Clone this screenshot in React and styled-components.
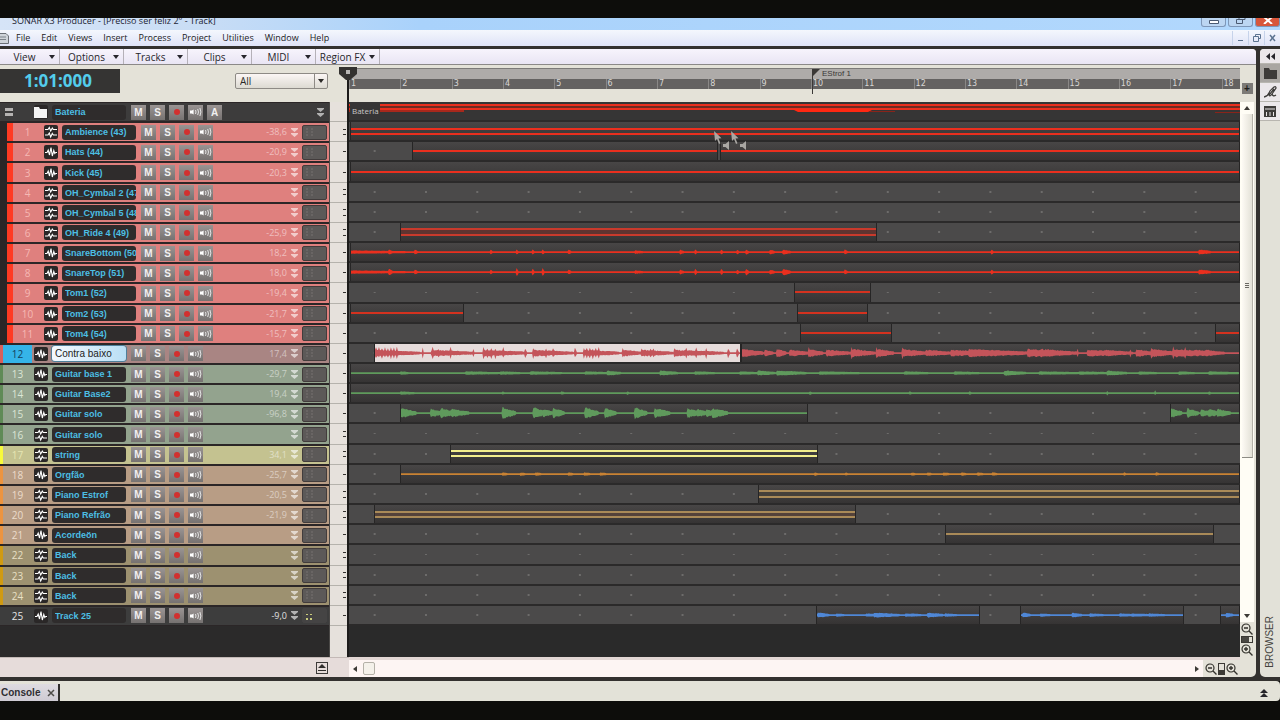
import React from "react";
import styled, { createGlobalStyle, css } from "styled-components";

const GlobalStyle = createGlobalStyle`
  * {
    box-sizing: border-box;
  }

  body {
    margin: 0;
    background: #0d0d0b;
    font-family: "Liberation Sans", sans-serif;
    font-size: 10px;
  }

  button, input, select {
    font-family: inherit;
    font-size: inherit;
    border: none;
    padding: 0;
    margin: 0;
  }

  ul {
    list-style: none;
    margin: 0;
    padding: 0;
  }
`;

const UI_FONT = `"Open Sans", "Noto Sans", sans-serif`;

/* ---------- data ---------- */

// width of the visible timeline, in the units used by the clips below
const SPAN = 891;
const BARS = Array.from({ length: 18 }, (_, i) => i + 1);

const MENUS = [
  "File",
  "Edit",
  "Views",
  "Insert",
  "Process",
  "Project",
  "Utilities",
  "Window",
  "Help",
];
const TOOLS = ["View", "Options", "Tracks", "Clips", "MIDI", "Region FX"];

const RED = "#ea2f1e";
const GREEN = "#5f9a5c";
const ORANGE = "#c98233";
const SAND = "#a98a58";
const BLUE = "#4f87d6";
const PINK = "#c4545a";

const THEMES = {
  red: { bg: "#df807e", strip: "#ff3a22", num: "#f6b9b4" },
  bass: { bg: "#a98583", strip: "#d8605c", num: "#14405c" },
  green: { bg: "#93a38e", strip: "#5f8a56", num: "#dbe6d6" },
  yellow: { bg: "#c4c290", strip: "#f8fa3c", num: "#e6e6b4" },
  orange: { bg: "#b89d85", strip: "#ec9440", num: "#ecdccb" },
  gold: { bg: "#9d9170", strip: "#d09a12", num: "#e9e0c4" },
  plain: { bg: "#3d3d3d", strip: "#3d3d3d", num: "#e6e6e6" },
};

const range = (from, to, step) => {
  const out = [];
  for (let i = from; i <= to; i += step) out.push(i);
  return out;
};

// [start, length, height]: a burst falls off towards its end
const SNARE = [[0, 55, 1], [38, 4, 3], [64, 3, 2], [140, 2, 2], [166, 2, 4], [182, 2, 3], [192, 2, 4], [218, 3, 2], [285, 8, 1], [330, 4, 2], [345, 2, 3], [371, 2, 3], [387, 2, 2], [396, 3, 3], [420, 5, 2], [433, 8, 3], [495, 3, 2], [642, 2, 2], [850, 12, 2]];

const BASS_SEL = [
  ...range(1, 24, 3).map((x) => [x, 1, 6]),
  [0, 46, 3], [48, 1, 6], [57, 42, 3], [58, 1, 6], [64, 1, 5], [76, 1, 6], [99, 1, 5],
  [109, 44, 3], ...range(109, 124, 4).map((x) => [x, 1, 6]), [129, 1, 6], [151, 2, 5],
  [159, 41, 3], [159, 1, 6], [172, 1, 6], [179, 2, 5], [201, 2, 5],
  [210, 36, 3], ...range(210, 225, 3).map((x) => [x, 1, 6]), [249, 20, 3], [249, 1, 6],
  [268, 32, 3], ...range(268, 281, 3).map((x) => [x, 1, 4]), [301, 50, 3],
  [301, 1, 5], [313, 1, 6], [323, 1, 6], [333, 1, 6], [355, 2, 5], [364, 2, 5],
];

const BASS_REST = [
  [0, 22, 4], [23, 9, 3], [35, 10, 4], [48, 20, 3], [67, 15, 4], [67, 1, 6], [85, 26, 3],
  [110, 24, 4], [110, 1, 6], [135, 18, 4], [135, 1, 6], [161, 24, 4], [161, 1, 6],
  [185, 26, 3], [210, 36, 3], [228, 60, 4], [244, 36, 3], [287, 50, 4], [287, 1, 6],
  [300, 36, 4], [337, 1, 5], [347, 46, 3], [365, 24, 3], [390, 1, 4], [396, 16, 4],
  [411, 26, 4], [411, 1, 6], [433, 40, 4], [433, 1, 7], [445, 1, 6], [455, 30, 3], [466, 16, 3],
];

const SOLO = [[0, 16, 5], [30, 12, 4], [40, 16, 5], [51, 18, 4], [102, 14, 6], [133, 12, 6], [143, 10, 4], [153, 12, 5], [185, 14, 6], [205, 12, 5], [235, 13, 6], [255, 16, 5], [288, 12, 5], [298, 10, 4], [307, 10, 4], [313, 16, 5]];

const line = (x, w, color) => ({ x, w, color, lines: [50] });
const pair = (x, w, color, fill) => ({ x, w, color, lines: [36, 64], fill });
const wave = (x, w, color, bursts, extra) => ({ x, w, color, bursts, ...extra });

const TRACKS = [
  { id: 1, name: "Ambience (43)", theme: "red", child: true, stereo: true, vol: "-38,6", clips: [pair(1, 890, RED)] },
  { id: 2, name: "Hats (44)", theme: "red", child: true, vol: "-20,9", clips: [line(63, 306, RED), line(371, 520, RED)] },
  { id: 3, name: "Kick (45)", theme: "red", child: true, vol: "-20,3", clips: [line(1, 890, RED)] },
  { id: 4, name: "OH_Cymbal 2 (47)", theme: "red", child: true, stereo: true, clips: [] },
  { id: 5, name: "OH_Cymbal 5 (48)", theme: "red", child: true, stereo: true, clips: [] },
  { id: 6, name: "OH_Ride 4 (49)", theme: "red", child: true, stereo: true, vol: "-25,9", clips: [pair(51, 477, "#c93a2c", "#5f3430")] },
  { id: 7, name: "SnareBottom (50)", theme: "red", child: true, vol: "18,2", clips: [wave(1, 890, RED, SNARE.map(([x, w, h]) => [x, w, Math.min(h, 2)]))] },
  { id: 8, name: "SnareTop (51)", theme: "red", child: true, vol: "18,0", clips: [wave(1, 890, RED, SNARE)] },
  { id: 9, name: "Tom1 (52)", theme: "red", child: true, vol: "-19,4", clips: [line(445, 77, "#d4321f")] },
  { id: 10, name: "Tom2 (53)", theme: "red", child: true, vol: "-21,7", clips: [line(1, 114, "#d4321f"), line(448, 71, "#d4321f")] },
  { id: 11, name: "Tom4 (54)", theme: "red", child: true, vol: "-15,7", clips: [line(451, 92, "#d4321f"), line(866, 25, "#d4321f")] },
  {
    id: 12,
    name: "Contra baixo",
    theme: "bass",
    selected: true,
    vol: "17,4",
    clips: [wave(25, 367, PINK, BASS_SEL, { selected: true }), wave(392, 499, PINK, BASS_REST)],
  },
  {
    id: 13,
    name: "Guitar base 1",
    theme: "green",
    vol: "-29,7",
    clips: [wave(1, 890, GREEN, [[50, 8, 1], [115, 35, 1], [150, 20, 1], [180, 32, 1], [235, 22, 1], [257, 14, 2], [310, 18, 2], [345, 20, 1], [390, 20, 1], [408, 18, 2], [427, 30, 2], [470, 40, 1], [555, 24, 1], [605, 25, 1], [655, 22, 2], [690, 40, 1], [730, 30, 1], [758, 20, 2], [790, 18, 1], [830, 16, 1], [860, 30, 1]])],
  },
  {
    id: 14,
    name: "Guitar Base2",
    theme: "green",
    vol: "19,4",
    clips: [wave(1, 890, GREEN, [[50, 14, 1], [152, 2, 1], [211, 3, 1], [277, 2, 1], [460, 2, 1], [560, 2, 1], [620, 2, 1], [758, 1, 2], [806, 1, 2], [860, 2, 1]])],
  },
  {
    id: 15,
    name: "Guitar solo",
    theme: "green",
    vol: "-96,8",
    clips: [wave(51, 408, GREEN, SOLO), wave(821, 70, GREEN, [[0, 12, 5], [17, 12, 5], [31, 10, 4], [39, 12, 4], [48, 14, 4]])],
  },
  { id: 16, name: "Guitar solo", theme: "green", stereo: true, clips: [] },
  { id: 17, name: "string", theme: "yellow", stereo: true, vol: "34,1", clips: [pair(101, 368, "#f2ee8c")] },
  {
    id: 18,
    name: "Orgfão",
    theme: "orange",
    vol: "-25,7",
    clips: [wave(51, 840, ORANGE, [[102, 5, 1], [120, 5, 1], [135, 6, 1], [168, 5, 1], [184, 6, 1], [200, 6, 1], [415, 3, 1], [446, 2, 1], [512, 4, 1], [528, 4, 1], [544, 6, 1], [562, 5, 1], [578, 6, 1], [593, 5, 1], [725, 2, 1], [757, 3, 1]])],
  },
  { id: 19, name: "Piano Estrof", theme: "orange", stereo: true, vol: "-20,5", clips: [pair(409, 482, SAND, "#45403a")] },
  { id: 20, name: "Piano Refrão", theme: "orange", stereo: true, vol: "-21,9", clips: [pair(25, 482, SAND, "#54423a")] },
  { id: 21, name: "Acordeön", theme: "orange", clips: [line(596, 269, SAND)] },
  { id: 22, name: "Back", theme: "gold", stereo: true, clips: [] },
  { id: 23, name: "Back", theme: "gold", stereo: true, clips: [] },
  { id: 24, name: "Back", theme: "gold", stereo: true, clips: [] },
  {
    id: 25,
    name: "Track 25",
    theme: "plain",
    vol: "-9,0",
    clips: [
      wave(467, 164, BLUE, [[1, 12, 2], [20, 8, 1], [50, 16, 1], [58, 26, 2], [90, 12, 1], [96, 10, 1], [112, 16, 2], [130, 12, 1]]),
      wave(671, 164, BLUE, [[2, 8, 2], [20, 10, 1], [52, 10, 2], [70, 14, 1], [100, 14, 1], [112, 20, 1], [130, 16, 1]]),
      wave(871, 20, BLUE, [[6, 8, 2]]),
    ],
  },
];

/* ---------- drawings ---------- */

const noise = (x, seed) => {
  const v = Math.sin(x * 12.9898 + seed * 78.233) * 43758.5453;
  return v - Math.floor(v);
};

const wavePath = (width, bursts) => {
  const up = [];
  const down = [];
  for (let x = 0; x <= width; x += 1) {
    let h = 0;
    bursts.forEach(([start, len, amp]) => {
      if (x >= start && x < start + len) {
        h = Math.max(h, amp * (1 - (0.8 * (x - start)) / len));
      }
    });
    const top = Math.round((1 + h * (0.6 + 0.4 * noise(x, width))) * 10) / 10;
    const bottom = Math.round((1 + h * (0.6 + 0.4 * noise(x, width + 7))) * 10) / 10;
    up.push(`${x},${10 - top}`);
    down.unshift(`${x},${10 + bottom}`);
  }
  return `M${up.join("L")}L${down.join("L")}Z`;
};

const Svg = ({ size = 12, w = size, h = size, children, ...rest }) => (
  <svg width={w} height={h} aria-hidden="true" {...rest}>
    {children}
  </svg>
);

const MonoIcon = () => (
  <Svg size={14} viewBox="0 0 14 14">
    <path
      d="M1 7.500h2l1.200-2.500 1.300 5L7 2.500l1.300 8.500L9.800 5.500l1 3 .9-1H13"
      fill="none"
      stroke="#fff"
      strokeWidth="1.100"
    />
  </Svg>
);

const StereoIcon = () => (
  <Svg size={14} viewBox="0 0 14 14">
    <path
      d="M1 4.500h3l1.300-2 1.400 3.500L8.300 3l1 1.500H13M1 10h3l1.300-2 1.400 4L8.300 8.500l1 1.500H13"
      fill="none"
      stroke="#fff"
      strokeWidth="1.100"
    />
  </Svg>
);

const EchoIcon = () => (
  <Svg w={13} h={10} viewBox="0 0 13 10">
    <path d="M1 3.500h2L4.600 2.500v5L3 6.500H1z" fill="#fff" />
    <path
      d="M6.500 3q1 2 0 4M8.700 2q1.600 3 0 6M10.900 1q2 4 0 8"
      fill="none"
      stroke="#e4e4e4"
      strokeWidth="1"
    />
  </Svg>
);

const FolderIcon = ({ color = "#fff" }) => (
  <Svg w={13} h={11} viewBox="0 0 13 11">
    <path d="M0 0h5l1 2h7v9H0z" fill={color} />
  </Svg>
);

const DownArrows = () => (
  <Svg w={7} h={9} viewBox="0 0 7 9">
    <path d="M0 0h7v1L3.500 4 0 1zM0 5h7v1L3.500 9 0 6z" fill="currentColor" />
  </Svg>
);

const Caret = ({ dir = "down" }) => {
  const paths = {
    down: "M0 1h6L3 5z",
    up: "M0 5h6L3 1z",
    left: "M5 0v6L1 3z",
    right: "M1 0v6l4-3z",
  };
  return (
    <Svg size={6} viewBox="0 0 6 6">
      <path d={paths[dir]} fill="currentColor" />
    </Svg>
  );
};

const ZoomIcon = ({ plus }) => (
  <Svg size={12} viewBox="0 0 12 12">
    <circle cx="5" cy="5" r="4" fill="none" stroke="#33322c" strokeWidth="1.200" />
    <path
      d={plus ? "M3 5h4M5 3v4M8 8l3.500 3.500" : "M3 5h4M8 8l3.500 3.500"}
      stroke="#33322c"
      strokeWidth="1.400"
    />
  </Svg>
);

const PointerGhost = () => (
  <Svg w={17} h={21} viewBox="0 0 17 21">
    <path d="M0 0l1 10 2-2 2 5 1.500-.8-2-4.700 3-.3z" fill="#a9a7a3" />
    <path d="M9 13h2.500L15 10v9l-3.500-3H9z" fill="#a9a7a3" />
  </Svg>
);

/* ---------- window chrome ---------- */

const Desktop = styled.div`
  display: flex;
  flex-direction: column;
  height: 100vh;
  padding: 18px 0 19px;
  background: #0d0d0b;
  overflow: hidden;
`;

const TitleBar = styled.header`
  display: flex;
  justify-content: space-between;
  height: 12px;
  flex: none;
  padding-left: 12px;
  overflow: hidden;
  background: linear-gradient(90deg, #d6e4f7 0, #c9ddf5 200px, #a9d2fb 420px, #b2d8fd 100%);
`;

const Title = styled.h1`
  margin: 0;
  font: 400 9px/6px ${UI_FONT};
  color: #1c2433;
  white-space: nowrap;
`;

const WindowButtons = styled.div`
  display: flex;
  gap: 2px;
`;

const WindowButton = styled.button`
  display: flex;
  align-items: flex-start;
  justify-content: center;
  width: 25px;
  height: 9px;
  border: 1px solid #7e97b8;
  border-top: none;
  border-radius: 0 0 3px 3px;
  background: ${(p) => (p.$close ? "#d8563a" : "#bcd6f2")};
  color: ${(p) => (p.$close ? "#fff" : "#4a5a72")};
`;

const MenuBar = styled.nav`
  display: flex;
  align-items: center;
  height: 16px;
  flex: none;
  background: linear-gradient(#f4f7fd, #dfe3f7);
`;

const DocIcon = styled.span`
  display: flex;
  width: 10px;
`;

const Menu = styled.button`
  padding: 0 5px;
  margin-left: 1px;
  background: none;
  font: 400 9px/16px ${UI_FONT};
  color: #1b1b24;
`;

const DocButtons = styled.div`
  display: flex;
  margin-left: auto;
`;

const DocButton = styled.button`
  display: flex;
  align-items: center;
  justify-content: center;
  width: 16px;
  height: 14px;
  border-left: 1px solid #c6d3ea;
  background: none;
  color: #5b7390;
`;

const Workspace = styled.main`
  display: flex;
  gap: 4px;
  flex: 1;
  min-height: 0;
  padding: 3px 0 4px;
  background: #33312f;
`;

const TrackView = styled.section`
  flex: 1;
  min-width: 0;
  display: flex;
  flex-direction: column;
  border-radius: 0 4px 5px 0;
  background: #e4e2d8;
  overflow: hidden;
`;

const ToolBar = styled.div`
  display: flex;
  height: 16px;
  flex: none;
  background: linear-gradient(#f7f4fc, #e9e5f4);
  border-bottom: 1px solid #8b8988;
`;

const Tool = styled.button`
  display: flex;
  align-items: center;
  width: 64px;
  padding-right: 4px;
  border-right: 1px solid #b5b1b8;
  background: none;
  color: #26252b;
  font: 400 10px/14px ${UI_FONT};
  white-space: nowrap;

  &:first-child {
    width: 60px;
  }
`;

const ToolLabel = styled.span`
  flex: 1;
  text-align: center;
`;

/* ---------- track view grid ---------- */

const Board = styled.div`
  flex: 1;
  min-height: 0;
  display: grid;
  grid-template-columns: 329px 20px minmax(0, 1fr) 14px;
  grid-template-rows: 37px minmax(0, 1fr) 20px;
  padding-right: 2px;
`;

const HeadCell = styled.div`
  grid-column: 1 / 3;
  display: flex;
  align-items: flex-start;
  justify-content: space-between;
  padding: 4px 21px 0 0;
`;

const NowTime = styled.output`
  width: 120px;
  height: 24px;
  padding-right: 4px;
  background: #353433;
  color: #53cdec;
  font: 700 17px/24px ${UI_FONT};
  text-align: center;
`;

const FilterBox = styled.label`
  position: relative;
  display: flex;
  width: 93px;
  height: 16px;
  margin-top: 4px;
  border: 1px solid #8d8a85;
  border-radius: 2px;
  background: linear-gradient(#fbf6f5, #dcdad2);
  color: #2a2927;
`;

const FilterSelect = styled.select`
  width: 100%;
  padding-left: 4px;
  appearance: none;
  background: none;
  color: inherit;
  font-family: ${UI_FONT};
`;

const FilterArrow = styled.span`
  position: absolute;
  top: 0;
  right: 0;
  display: flex;
  align-items: center;
  justify-content: center;
  width: 13px;
  height: 14px;
  border-left: 1px solid #8d8a85;
  pointer-events: none;
`;

const RulerCell = styled.div`
  padding-top: 3px;
`;

const Ruler = styled.div`
  border-top: 1px solid #7c7a78;
  background: #aeaba9;
`;

const MarkerStrip = styled.div`
  position: relative;
  height: 10px;
`;

const Marker = styled.span`
  position: absolute;
  top: 0;
  display: flex;
  gap: 2px;
  height: 25px;
  border-left: 1px solid #3a3836;
  color: #3a3836;
  font-size: 8px;
  line-height: 10px;
  white-space: nowrap;
`;

const BarNumbers = styled.ol`
  display: grid;
  grid-template-columns: repeat(17, minmax(0, 100fr)) minmax(0, 36fr);
  height: 10px;
  margin: 0 0 5px;
  padding: 0;
  list-style: none;
  background: #646261;
`;

const BarNumber = styled.li`
  padding-left: 1px;
  border-left: 1px solid #8a8886;
  color: #d8d6d4;
  font: 400 8px/10px "DejaVu Sans", sans-serif;
`;

const AddCell = styled.div`
  display: flex;
  align-items: flex-end;
  justify-content: center;
  padding-bottom: 8px;
`;

const AddButton = styled.button`
  width: 11px;
  height: 11px;
  background: #7c7a77;
  color: #1d1c1a;
  font-weight: 700;
  line-height: 10px;
`;

const rows = css`
  display: grid;
  grid-template-rows: repeat(26, minmax(0, 1fr));
  height: 100%;
  padding-bottom: 31px;
`;

const TrackList = styled.ul`
  ${rows}
  background: #2b2a2a;
`;

const TrackRow = styled.li`
  display: flex;
  align-items: center;
  padding: 0 2px 0 ${(p) => (p.$child ? 7 : 0)}px;
  border-top: 1px solid #2b2627;
  border-bottom: 1px solid #2b2627;
  background: ${(p) =>
    p.$child ? `linear-gradient(90deg, #2b2627 7px, ${p.$bg} 7px)` : p.$bg};
`;

const Strip = styled.span`
  align-self: stretch;
  width: ${(p) => (p.$child ? 6 : 3)}px;
  background: ${(p) => p.$color};
`;

const TrackNumber = styled.span`
  align-self: stretch;
  display: flex;
  align-items: center;
  justify-content: center;
  width: 29px;
  margin-right: 2px;
  background: ${(p) => (p.$selected ? "#35b4e8" : "none")};
  color: ${(p) => p.$color};
  font: 400 10px/14px ${UI_FONT};
`;

const TypeIcon = styled.span`
  display: flex;
  margin-right: 4px;
  border-radius: 2px;
  background: #2a2727;
`;

const NameBox = styled.input`
  width: 74px;
  height: 15px;
  margin-right: 5px;
  padding: 0 0 0 3px;
  border-radius: 3px;
  background: ${(p) => (p.$selected ? "linear-gradient(90deg, #f4faff, #b9def5)" : "#2f2c2c")};
  color: ${(p) => (p.$selected ? "#1d1d22" : "#4cbfe4")};
  box-shadow: ${(p) => (p.$selected ? "0 0 0 1px #4f7f9a" : "none")};
  font-size: ${(p) => (p.$selected ? 10 : 9)}px;
  font-weight: ${(p) => (p.$selected ? 400 : 700)};
`;

const ButtonSet = styled.span`
  display: flex;
  gap: 4px;
`;

const RowButton = styled.button`
  display: flex;
  align-items: center;
  justify-content: center;
  width: 15px;
  height: 15px;
  background: linear-gradient(#9a9493, #767271);
  color: #f2f0f0;
  font-size: 10px;
  font-weight: 700;
`;

const RecDot = styled.i`
  width: 6px;
  height: 6px;
  border-radius: 50%;
  background: #d2302f;
`;

const Volume = styled.span`
  margin-left: auto;
  width: 36px;
  padding-right: 4px;
  color: ${(p) => (p.$strong ? "#e0e0e0" : "rgba(255, 255, 255, 0.5)")};
  font: 400 9px/14px ${UI_FONT};
  text-align: right;
`;

const Expand = styled.button`
  display: flex;
  margin-right: ${(p) => (p.$folder ? 3 : 4)}px;
  background: none;
  color: rgba(255, 255, 255, 0.6);
`;

const Meter = styled.span`
  display: flex;
  align-items: ${(p) => (p.$plain ? "flex-end" : "center")};
  width: 25px;
  height: 15px;
  padding: 2px 3px;
  border: 1px solid ${(p) => (p.$plain ? "#454444" : "#423c3c")};
  border-radius: 2px;
  background: ${(p) => (p.$plain ? "#454444" : "#5c5958")};
  color: ${(p) => (p.$plain ? "#c9cc7c" : "#777371")};
`;

const Gutter = styled.div`
  ${rows}
  border-left: 1px solid #4a4846;
  background: #e6e1dc;
`;

const Scale = styled.div`
  display: flex;
  flex-direction: column;
  align-items: flex-end;
  justify-content: space-evenly;
  padding: 2px 3px 2px 0;
  border-bottom: 1px solid #b5b2ac;
`;

const Tick = styled.i`
  width: 3px;
  height: 1px;
  background: #33312e;
`;

const LaneArea = styled.div`
  position: relative;
  min-width: 0;
`;

const Lanes = styled.div`
  ${rows}
  background: #2a2a2a;
`;

const Lane = styled.div`
  position: relative;
  border-bottom: 2px solid #2b2a2a;
  background-color: ${(p) => (p.$dark ? "#363535" : "#4b4a4a")};
  background-image: ${(p) =>
    p.$dark
      ? "none"
      : "radial-gradient(circle at 26px 50%, #6d6c6b 1px, transparent 1px)"};
  background-size: 5.76% 100%;
  overflow: hidden;
`;

const Clip = styled.div`
  position: absolute;
  top: 0;
  bottom: 0;
  border-left: 1px solid #262525;
  border-right: 1px solid #262525;
  background: ${(p) => (p.$selected ? "#e6dcdb" : "linear-gradient(#484646, #363434)")};
`;

const ClipFill = styled.i`
  position: absolute;
  top: 36%;
  bottom: 36%;
  left: 0;
  right: 0;
  background: ${(p) => p.$color};
`;

const ClipLine = styled.i`
  position: absolute;
  left: 0;
  right: 0;
  height: 2px;
  margin-top: -1px;
  background: ${(p) => p.$color};
`;

const WaveSvg = styled.svg`
  display: block;
  width: 100%;
  height: 100%;
`;

const FolderLabel = styled.span`
  position: absolute;
  top: 2px;
  left: 1px;
  padding: 0 1px 0 2px;
  background: #363535;
  color: #c9c7c6;
  font: 400 8px/14px ${UI_FONT};
`;

const PlayHead = styled.div`
  position: absolute;
  top: -35px;
  bottom: 0;
  left: -10px;
  width: 18px;
  display: flex;
  flex-direction: column;
  align-items: center;
  pointer-events: none;
`;

const PlayLine = styled.i`
  flex: 1;
  width: 2px;
  background: #1c1b1a;
`;

const Ghosts = styled.div`
  position: absolute;
  top: 29px;
  left: 41%;
  display: flex;
`;

const VScroll = styled.div`
  display: flex;
  flex-direction: column;
  align-items: center;
  min-height: 0;
  background: #fffdf5;
`;

const ScrollButton = styled.button`
  display: flex;
  align-items: center;
  justify-content: center;
  flex: none;
  width: 12px;
  height: 12px;
  background: none;
  color: #3c3a35;
`;

const VThumb = styled.div`
  display: flex;
  align-items: center;
  justify-content: center;
  width: 11px;
  height: 62%;
  border-right: 1px solid #b4b1a8;
  border-bottom: 1px solid #8d8b84;
  background: linear-gradient(90deg, #fdfaf4, #e3e1d7);
`;

const Grip = styled.i`
  width: 4px;
  height: 6px;
  background: repeating-linear-gradient(#6b6963 0 1px, transparent 1px 2px);
`;

const ZoomStack = styled.div`
  display: flex;
  flex-direction: ${(p) => (p.$row ? "row" : "column")};
  align-items: center;
  gap: 1px;
  align-self: stretch;
  padding: ${(p) => (p.$row ? "0 2px" : "1px 0")};
  background: #e4e2d8;
`;

const Spacer = styled.span`
  flex: 1;
`;

const ZoomButton = styled.button`
  display: flex;
  background: none;
`;

const ZoomLevel = styled.i`
  width: ${(p) => (p.$row ? 7 : 12)}px;
  height: ${(p) => (p.$row ? 12 : 7)}px;
  border: 1px solid #3c3a35;
  background: ${(p) =>
    p.$row
      ? "linear-gradient(transparent 60%, #3c3a35 60%)"
      : "linear-gradient(90deg, #4a4843 70%, transparent 70%)"};
`;

const FootCell = styled.div`
  grid-column: 1 / 3;
  display: flex;
  align-items: center;
  justify-content: flex-end;
  padding-right: 21px;
  border-top: 1px solid #c3b9b6;
  background: #e6dcda;
`;

const SplitButton = styled.button`
  display: flex;
  align-items: center;
  justify-content: center;
  width: 12px;
  height: 12px;
  border: 1px solid #3c3a38;
  background: none;
`;

const HScroll = styled.div`
  display: flex;
  align-items: center;
  border-top: 3px solid #e2d6d3;
  background: #fdf5f3;
`;

const HThumb = styled.div`
  width: 12px;
  height: 13px;
  margin-left: 2px;
  border: 1px solid #b4b1a8;
  border-radius: 2px;
  background: #f4f1ea;
`;

/* ---------- browser and console ---------- */

const Browser = styled.aside`
  display: flex;
  flex-direction: column;
  align-items: center;
  width: 20px;
  border-radius: 4px 0 0 5px;
  background: #e2e1d8;
  overflow: hidden;
`;

const BrowserButton = styled.button`
  display: flex;
  align-items: center;
  justify-content: center;
  flex: none;
  width: 100%;
  height: ${(p) => (p.$slim ? 15 : 19)}px;
  border-bottom: 1px solid #b8b6b0;
  background: ${(p) => (p.$active ? "#a9a6a2" : "#ebe7ea")};
`;

const BrowserLabel = styled.span`
  margin: auto 0 9px;
  writing-mode: vertical-rl;
  transform: rotate(180deg);
  color: #45433e;
  font-size: 10px;
  line-height: 12px;
`;

const ConsoleBar = styled.footer`
  display: flex;
  align-items: stretch;
  justify-content: space-between;
  height: 20px;
  flex: none;
  padding-top: 3px;
  border-radius: 0 4px 4px 0;
  background: #e3e2d8;
`;

const ConsoleTab = styled.div`
  display: flex;
  align-items: center;
  gap: 7px;
  padding: 0 3px 0 1px;
  border-right: 2px solid #2f2d2b;
  background: linear-gradient(#dedbe0, #cfcbd4);
`;

const TabButton = styled.button`
  display: flex;
  align-items: center;
  background: none;
  color: #2f2e33;
  font-size: ${(p) => (p.$icon ? 8 : 10)}px;
  font-weight: 700;
`;

const DockArrow = styled.button`
  display: flex;
  align-items: center;
  padding-right: 12px;
  background: none;
`;

/* ---------- components ---------- */

const percent = (n) => `${(n / SPAN) * 100}%`;

const TrackButtons = ({ name, folder }) => (
  <ButtonSet>
    <RowButton aria-label={`Mute ${name}`}>M</RowButton>
    <RowButton aria-label={`Solo ${name}`}>S</RowButton>
    <RowButton aria-label={`Arm ${name}`}>
      <RecDot />
    </RowButton>
    <RowButton aria-label={`Input echo ${name}`}>
      <EchoIcon />
    </RowButton>
    {folder && <RowButton aria-label={`Archive ${name}`}>A</RowButton>}
  </ButtonSet>
);

const FolderTrack = () => (
  <TrackRow $bg="#3d3c3c">
    <Strip $color="#3d3c3c" />
    <TrackNumber $color="#ccc">
      <Svg w={28} h={8} viewBox="0 0 28 8">
        <path d="M1 0h8v3H1zM1 5h8v3H1z" fill="#b5b3b2" />
      </Svg>
    </TrackNumber>
    <TypeIcon>
      <Svg size={14} viewBox="0 0 14 14">
        <path d="M0 2h5l1 2h7v9H0z" fill="#f4f4f4" />
      </Svg>
    </TypeIcon>
    <NameBox defaultValue="Bateria" aria-label="Folder name" />
    <TrackButtons name="Bateria" folder />
    <Volume />
    <Expand $folder aria-label="Expand Bateria">
      <DownArrows />
    </Expand>
  </TrackRow>
);

const Track = ({ track }) => {
  const { id, name, theme, child, stereo, selected, vol } = track;
  const colors = THEMES[theme];
  return (
    <TrackRow $child={child} $bg={colors.bg}>
      <Strip $child={child} $color={colors.strip} />
      <TrackNumber $color={colors.num} $selected={selected}>
        {id}
      </TrackNumber>
      <TypeIcon>{stereo ? <StereoIcon /> : <MonoIcon />}</TypeIcon>
      <NameBox $selected={selected} defaultValue={name} aria-label={`Track ${id} name`} />
      <TrackButtons name={name} />
      <Volume $strong={theme === "plain"}>{vol}</Volume>
      <Expand aria-label={`Expand ${name}`}>
        <DownArrows />
      </Expand>
      <Meter $plain={theme === "plain"}>
        <Svg w={8} h={9} viewBox="0 0 8 9">
          {theme === "plain" ? (
            <path d="M0 3h2v1H0zM4 3h2v1H4zM0 7h2v2H0zM4 7h2v2H4z" fill="currentColor" />
          ) : (
            <path d="M1 0v9M6 0v9" stroke="currentColor" strokeDasharray="2 1" />
          )}
        </Svg>
      </Meter>
    </TrackRow>
  );
};

const ClipView = ({ clip }) => (
  <Clip $selected={clip.selected} style={{ left: percent(clip.x), width: percent(clip.w) }}>
    {clip.fill && <ClipFill $color={clip.fill} />}
    {clip.bursts ? (
      <WaveSvg viewBox={`0 0 ${clip.w} 20`} preserveAspectRatio="none">
        <path d={wavePath(clip.w, clip.bursts)} fill={clip.color} />
      </WaveSvg>
    ) : (
      clip.lines.map((top) => (
        <ClipLine key={top} $color={clip.color} style={{ top: `${top}%` }} />
      ))
    )}
  </Clip>
);

const FolderLane = () => (
  <Lane $dark>
    <WaveSvg viewBox={`0 0 ${SPAN} 18`} preserveAspectRatio="none">
      <path d={`M0 2h${SPAN}v2H0zM0 6h${SPAN}v2H0z`} fill={RED} />
      <path d={`M0 4h${SPAN}v2H0z`} fill="#6e2a22" />
      <path d="M0 8h115v2H0z" fill="#a8281c" />
      <path d="M443 7h82l-6 3h-70z" fill="#ff2812" />
      <path d="M520 9h26v1h-26zM866 10h25v1h-25z" fill="#8a241a" />
    </WaveSvg>
    <FolderLabel>Bateria</FolderLabel>
  </Lane>
);

const TimeRuler = () => (
  <RulerCell>
    <Ruler>
      <MarkerStrip>
        <Marker style={{ left: percent(463) }}>
          <Svg size={7} viewBox="0 0 7 7">
            <path d="M0 0h7L0 7z" fill="#3a3836" />
          </Svg>
          EStrof 1
        </Marker>
      </MarkerStrip>
      <BarNumbers>
        {BARS.map((bar) => (
          <BarNumber key={bar}>{bar}</BarNumber>
        ))}
      </BarNumbers>
    </Ruler>
  </RulerCell>
);

const BrowserPanel = () => (
  <Browser>
    <BrowserButton $slim aria-label="Collapse browser">
      <Svg w={9} h={7} viewBox="0 0 9 7">
        <path d="M4 0v7L0 3.500zM9 0v7L5 3.500z" fill="#26252a" />
      </Svg>
    </BrowserButton>
    <BrowserButton $active aria-label="Media">
      <FolderIcon color="#3d3b39" />
    </BrowserButton>
    <BrowserButton aria-label="Plug-ins">
      <Svg w={13} h={12} viewBox="0 0 13 12">
        <path
          d="M0 11q4-1 5-4t3-4l2-2q2-1 2 1L8 8q-2 3-3 1l5-6M8 8q1 3 4 1"
          fill="none"
          stroke="#3d3b39"
          strokeWidth="1.300"
        />
      </Svg>
    </BrowserButton>
    <BrowserButton aria-label="Synth rack">
      <Svg w={12} h={11} viewBox="0 0 12 11">
        <path d="M0 0h12v11H0z" fill="#3d3b39" />
        <path d="M1 3h10M2.500 6v4M6 6v4M9.500 6v4" stroke="#e8e4e6" />
      </Svg>
    </BrowserButton>
    <BrowserLabel>BROWSER</BrowserLabel>
  </Browser>
);

const App = () => (
  <>
    <GlobalStyle />
    <Desktop>
      <TitleBar>
        <Title>SONAR X3 Producer - [Preciso ser feliz 2° - Track]</Title>
        <WindowButtons>
          <WindowButton aria-label="Minimize">
            <Svg w={10} h={6} viewBox="0 0 10 6">
              <path d="M.5 2.500h9v3h-9z" fill="#fff" stroke="currentColor" />
            </Svg>
          </WindowButton>
          <WindowButton aria-label="Restore">
            <Svg w={10} h={7} viewBox="0 0 10 7">
              <path d="M3 0v1.500h6V0M.5 1.500h6v4h-6z" fill="none" stroke="currentColor" />
            </Svg>
          </WindowButton>
          <WindowButton $close aria-label="Close">
            <Svg w={10} h={6} viewBox="0 0 10 6">
              <path d="M1 -1l8 7M9 -1L1 6" stroke="currentColor" strokeWidth="2" />
            </Svg>
          </WindowButton>
        </WindowButtons>
      </TitleBar>

      <MenuBar>
        <DocIcon>
          <Svg w={9} h={11} viewBox="0 0 9 11">
            <path d="M0 .5h6l2.500 2.500v7.500H0" fill="#cfd4da" stroke="#6b7077" />
            <path d="M0 4h6M0 6.500h6" stroke="#7d838b" />
          </Svg>
        </DocIcon>
        {MENUS.map((menu) => (
          <Menu key={menu}>{menu}</Menu>
        ))}
        <DocButtons>
          <DocButton aria-label="Minimize document">
            <Svg size={8} viewBox="0 0 8 8">
              <path d="M1 6.500h5" stroke="currentColor" />
            </Svg>
          </DocButton>
          <DocButton aria-label="Restore document">
            <Svg size={8} viewBox="0 0 8 8">
              <path d="M2.500 2V.5h5v4H6M.5 2.500h5v5h-5z" fill="none" stroke="currentColor" />
            </Svg>
          </DocButton>
          <DocButton aria-label="Close document">
            <Svg size={8} viewBox="0 0 8 8">
              <path d="M1 1l5 6M6 1L1 7" stroke="currentColor" strokeWidth="1.500" />
            </Svg>
          </DocButton>
        </DocButtons>
      </MenuBar>

      <Workspace>
        <TrackView>
          <ToolBar>
            {TOOLS.map((tool) => (
              <Tool key={tool}>
                <ToolLabel>{tool}</ToolLabel>
                <Caret />
              </Tool>
            ))}
          </ToolBar>

          <Board>
            <HeadCell>
              <NowTime>1:01:000</NowTime>
              <FilterBox>
                <FilterSelect aria-label="Track filter">
                  <option>All</option>
                </FilterSelect>
                <FilterArrow>
                  <Caret />
                </FilterArrow>
              </FilterBox>
            </HeadCell>
            <TimeRuler />
            <AddCell>
              <AddButton aria-label="Add ruler">+</AddButton>
            </AddCell>

            <TrackList>
              <FolderTrack />
              {TRACKS.map((track) => (
                <Track key={track.id} track={track} />
              ))}
            </TrackList>
            <Gutter>
              <Scale />
              {TRACKS.map((track) => (
                <Scale key={track.id}>
                  <Tick />
                  {track.stereo && <Tick />}
                </Scale>
              ))}
            </Gutter>
            <LaneArea>
              <Lanes>
                <FolderLane />
                {TRACKS.map((track) => (
                  <Lane key={track.id}>
                    {track.clips.map((clip) => (
                      <ClipView key={clip.x} clip={clip} />
                    ))}
                  </Lane>
                ))}
              </Lanes>
              <PlayHead>
                <Svg w={18} h={13} viewBox="0 0 18 13">
                  <path d="M0 0h18v7l-7 6H7L0 7z" fill="#33312f" />
                  <path d="M7 3h4v4H7z" fill="#b8b6b4" />
                </Svg>
                <PlayLine />
              </PlayHead>
              <Ghosts>
                <PointerGhost />
                <PointerGhost />
              </Ghosts>
            </LaneArea>
            <VScroll>
              <ScrollButton aria-label="Scroll up">
                <Caret dir="up" />
              </ScrollButton>
              <VThumb>
                <Grip />
              </VThumb>
              <Spacer />
              <ScrollButton aria-label="Scroll down">
                <Caret />
              </ScrollButton>
              <ZoomStack>
                <ZoomButton aria-label="Zoom out vertically">
                  <ZoomIcon />
                </ZoomButton>
                <ZoomLevel />
                <ZoomButton aria-label="Zoom in vertically">
                  <ZoomIcon plus />
                </ZoomButton>
              </ZoomStack>
            </VScroll>

            <FootCell>
              <SplitButton aria-label="Show bus pane">
                <Svg size={8} viewBox="0 0 8 8">
                  <path d="M0 4h8L4 0zM0 6h8v1H0z" fill="#2f2d2b" />
                </Svg>
              </SplitButton>
            </FootCell>
            <HScroll>
              <ScrollButton aria-label="Scroll left">
                <Caret dir="left" />
              </ScrollButton>
              <HThumb />
              <Spacer />
              <ScrollButton aria-label="Scroll right">
                <Caret dir="right" />
              </ScrollButton>
              <ZoomStack $row>
                <ZoomButton aria-label="Zoom out horizontally">
                  <ZoomIcon />
                </ZoomButton>
                <ZoomLevel $row />
                <ZoomButton aria-label="Zoom in horizontally">
                  <ZoomIcon plus />
                </ZoomButton>
              </ZoomStack>
            </HScroll>
          </Board>
        </TrackView>
        <BrowserPanel />
      </Workspace>

      <ConsoleBar>
        <ConsoleTab>
          <TabButton>Console</TabButton>
          <TabButton $icon aria-label="Close console">
            <Svg size={8} viewBox="0 0 8 8">
              <path d="M1 1l6 6M7 1L1 7" stroke="#4d4b48" strokeWidth="1.500" />
            </Svg>
          </TabButton>
        </ConsoleTab>
        <DockArrow aria-label="Expand dock">
          <Svg w={8} h={8} viewBox="0 0 8 8">
            <path d="M0 4h8L4 0zM0 8h8L4 4z" fill="#26252a" />
          </Svg>
        </DockArrow>
      </ConsoleBar>
    </Desktop>
  </>
);

export default App;
